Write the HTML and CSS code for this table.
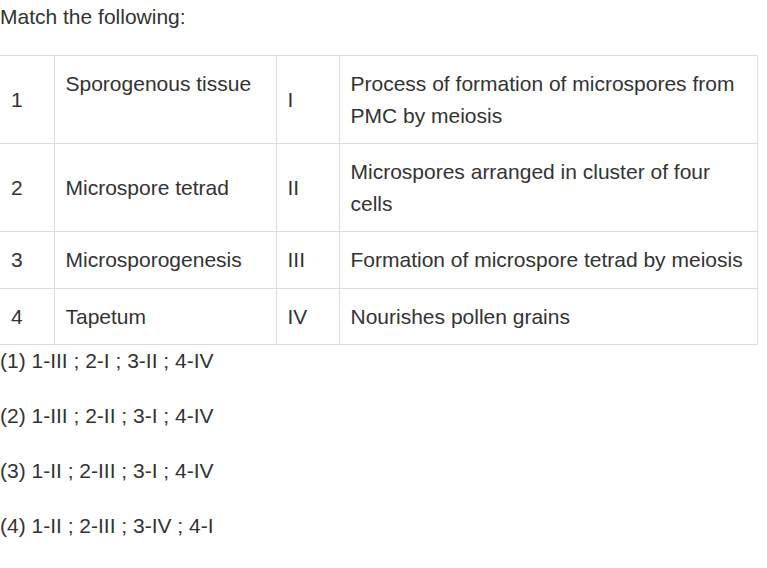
FILE: index.html
```html
<!DOCTYPE html>
<html>
<head>
<meta charset="utf-8">
<link rel="stylesheet" href="styles.css">
</head>
<body>
<div class="q">
  <p class="title">Match the following:</p>
  <table class="match">
    <colgroup>
      <col class="c1"><col class="c2"><col class="c3"><col class="c4">
    </colgroup>
    <tr class="r-tall">
      <td>1</td>
      <td class="top">Sporogenous tissue</td>
      <td>I</td>
      <td>Process of formation of microspores from PMC by meiosis</td>
    </tr>
    <tr class="r-tall">
      <td>2</td>
      <td>Microspore tetrad</td>
      <td>II</td>
      <td>Microspores arranged in cluster of four cells</td>
    </tr>
    <tr>
      <td>3</td>
      <td>Microsporogenesis</td>
      <td>III</td>
      <td>Formation of microspore tetrad by meiosis</td>
    </tr>
    <tr>
      <td>4</td>
      <td>Tapetum</td>
      <td>IV</td>
      <td>Nourishes pollen grains</td>
    </tr>
  </table>
  <p class="opt">(1) 1-III ; 2-I ; 3-II ; 4-IV</p>
  <p class="opt">(2) 1-III ; 2-II ; 3-I ; 4-IV</p>
  <p class="opt">(3) 1-II ; 2-III ; 3-I ; 4-IV</p>
  <p class="opt">(4) 1-II ; 2-III ; 3-IV ; 4-I</p>
</div>
</body>
</html>
```
FILE: styles.css
```css
html, body {
  margin: 0;
  padding: 0;
  background: #fff;
}
body {
  font-family: "Liberation Sans", Arial, sans-serif;
  font-size: 21px;
  line-height: 32px;
  color: #333;
}
.q {
  padding-top: 1px;
}
.title {
  margin: 0 0 22px;
}
.match {
  border-collapse: collapse;
  width: 757px;
  table-layout: fixed;
}
.c1 { width: 54px; }
.c2 { width: 222px; }
.c3 { width: 63px; }
.c4 { width: 418px; }
.match td {
  border: 1px solid #ddd;
  padding: 12px 12px 12px 11px;
  line-height: 31.5px;
  vertical-align: middle;
}
.match tr td:first-child {
  border-left: none;
}
.match td.top {
  vertical-align: top;
}
.opt {
  margin: 0 0 23px;
}
```
